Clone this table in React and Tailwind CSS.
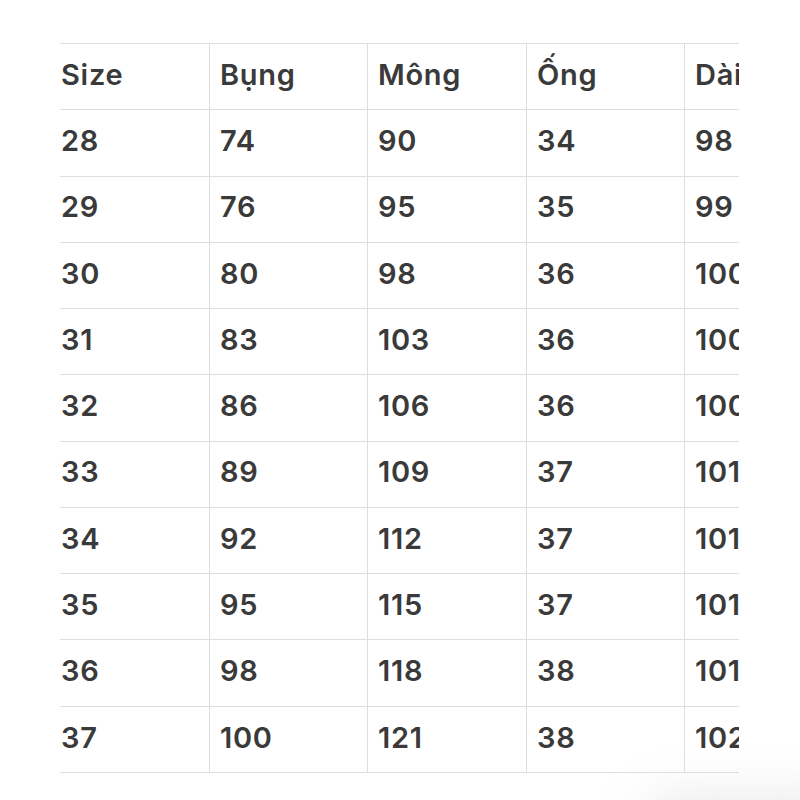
import React from "react";

const header = ["Size", "Bụng", "Mông", "Ống", "Dài"];
const rows = [
  ["28", "74", "90", "34", "98"],
  ["29", "76", "95", "35", "99"],
  ["30", "80", "98", "36", "100"],
  ["31", "83", "103", "36", "100"],
  ["32", "86", "106", "36", "100"],
  ["33", "89", "109", "37", "101"],
  ["34", "92", "112", "37", "101"],
  ["35", "95", "115", "37", "101"],
  ["36", "98", "118", "38", "101"],
  ["37", "100", "121", "38", "102"],
];

const widths = ["w-[149px]", "w-[158px]", "w-[159px]", "w-[158px]", "w-[158px]"];

function Row({ cells }) {
  return (
    <div className="flex h-[66.27px] border-t border-[#dedede] shrink-0">
      {cells.map((c, i) => (
        <div
          key={i}
          className={`${widths[i]} shrink-0 flex items-center pb-[4px] ${
            i === 0 ? "pl-[1px]" : "pl-[10px] border-l border-[#dedede]"
          } whitespace-nowrap`}
        >
          {c}
        </div>
      ))}
    </div>
  );
}

export default function App() {
  return (
    <div
      className="relative w-[800px] h-[800px] overflow-hidden bg-white text-[#3a3a3a] text-[29px] font-semibold tracking-[0.025em]"
      style={{ fontFamily: "Inter, 'Noto Sans', sans-serif" }}
    >
      <div className="absolute left-[640px] top-[795px] w-[220px] h-[80px] rounded-full bg-[#e2e2e2] blur-xl opacity-70" />
      <div className="relative ml-[60px] pt-[43px] w-[679px]">
        <div className="overflow-hidden w-[679px] border-b border-[#dedede]">
          <div className="w-[800px]">
            <Row cells={header} />
            {rows.map((r, i) => (
              <Row key={i} cells={r} />
            ))}
          </div>
        </div>
      </div>
    </div>
  );
}
